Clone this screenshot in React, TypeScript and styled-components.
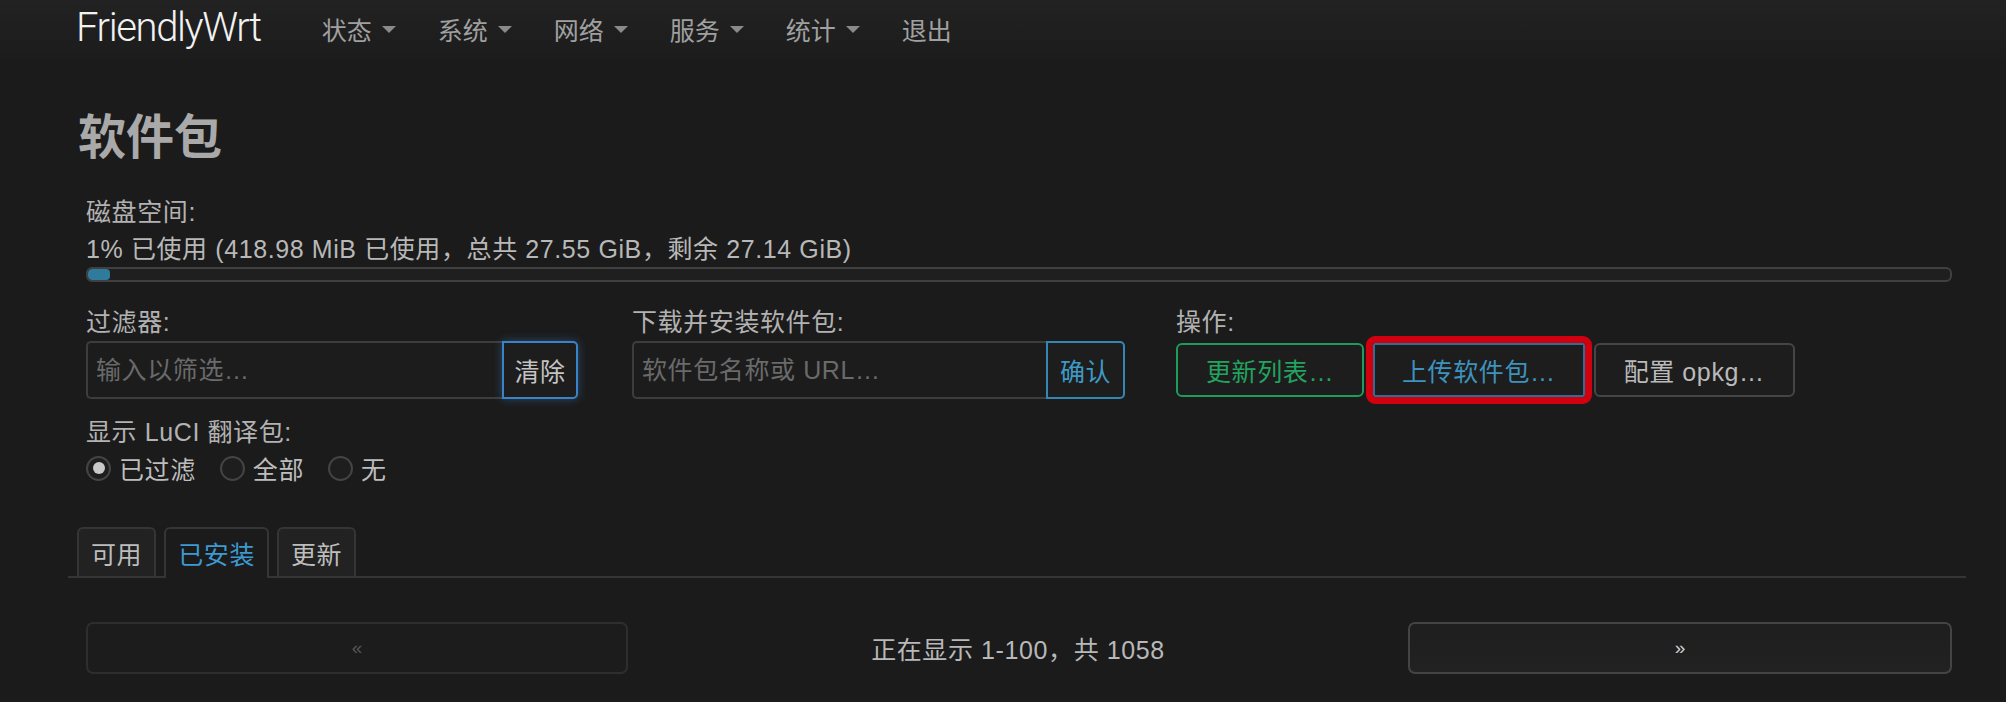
import React from 'react'
import styled, { createGlobalStyle } from 'styled-components'

const GlobalStyle = createGlobalStyle`
  html, body {
    margin: 0;
    padding: 0;
    background: #1b1b1b;
  }
  body {
    font-family: "Liberation Sans", "Noto Sans CJK SC", sans-serif;
    font-size: 25px;
    letter-spacing: 0.6px;
    color: #b4b4b4;
  }
  * { box-sizing: border-box; }
`

const NavBar = styled.header`
  height: 58px;
  display: flex;
  align-items: center;
  padding-left: 76px;
  background: linear-gradient(#222, #1c1c1c);
`

const Brand = styled.a`
  font-family: Roboto, "Liberation Sans", sans-serif;
  font-weight: 300;
  font-size: 40px;
  letter-spacing: -1.4px;
  color: #f2f2f2;
  margin: -4px 40px 0 0;
`

const NavItem = styled.span`
  display: flex;
  align-items: center;
  padding: 0 21px;
  color: #a0a0a0;
  font-size: 25px;
  letter-spacing: 0;
`

const Caret = styled.i`
  width: 0;
  height: 0;
  margin-left: 10px;
  border-left: 7px solid transparent;
  border-right: 7px solid transparent;
  border-top: 7px solid #8a8a8a;
`

const Main = styled.main`
  padding: 0 40px 0 68px;
`

const Title = styled.h2`
  margin: 52px 0 0 10px;
  font-size: 48px;
  line-height: 56px;
  font-weight: 700;
  letter-spacing: 0;
  color: #a9a9a9;
`

const Section = styled.div`
  padding: 0 14px 0 18px;
`

const Label = styled.div`
  line-height: 38px;
  color: #b2b2b2;
`

const Usage = styled.div`
  line-height: 36px;
  color: #b8b8b8;
`

const Progress = styled.div`
  height: 15px;
  border: 2px solid #404040;
  border-radius: 6px;
  background: #1f1f1f;
  overflow: hidden;
`

const ProgressFill = styled.div`
  height: 100%;
  background: #2f7b9c;
  border-radius: 4px;
`

const Controls = styled.div`
  display: grid;
  grid-template-columns: 546px 544px auto;
  margin-top: 21px;
`

const InputGroup = styled.div<{ $w: number }>`
  display: flex;
  width: ${p => p.$w}px;
  height: 58px;
`

const TextInput = styled.input`
  flex: 1;
  min-width: 0;
  background: #1c1c1c;
  border: 2px solid #3d3d3d;
  border-right: none;
  border-radius: 5px 0 0 5px;
  padding: 0 8px;
  font: inherit;
  letter-spacing: inherit;
  color: #b4b4b4;
  outline: none;
  &::placeholder { color: #6a6a6a; }
`

const AddonButton = styled.button<{ $tone: 'glow' | 'blue' }>`
  width: ${p => (p.$tone === 'glow' ? 76 : 79)}px;
  border-radius: 0 5px 5px 0;
  font: inherit;
  letter-spacing: inherit;
  background: #1d1d1d;
  border: 2px solid ${p => (p.$tone === 'glow' ? '#3a83c8' : '#3487b4')};
  color: ${p => (p.$tone === 'glow' ? '#c4c4c4' : '#3e9ac5')};
  box-shadow: ${p => (p.$tone === 'glow' ? '0 0 10px rgba(60, 130, 200, 0.45)' : 'none')};
  padding: 0;
`

const Actions = styled.div`
  display: flex;
  gap: 9px;
  height: 58px;
  align-items: center;
`

const ActionButton = styled.button<{ $tone: 'green' | 'blue' | 'plain'; $marked?: boolean }>`
  height: 54px;
  padding: 0 28px;
  font: inherit;
  letter-spacing: inherit;
  background: #1d1d1d;
  border: 2px solid ${p => (p.$tone === 'green' ? '#1e9c5c' : p.$tone === 'blue' ? '#2f6d96' : '#454545')};
  color: ${p => (p.$tone === 'green' ? '#22a35f' : p.$tone === 'blue' ? '#3d93bd' : '#bababa')};
  outline: ${p => (p.$marked ? '7px solid #d0000f' : 'none')};
  outline-offset: 0;
  border-radius: ${p => (p.$marked ? '2px' : '6px')};
  ${p => (p.$marked ? 'padding: 0 27px;' : '')}
`

const RadioRow = styled.div`
  display: flex;
  align-items: center;
  height: 34px;
  gap: 24px;
`

const RadioOption = styled.label`
  display: flex;
  align-items: center;
  gap: 8px;
  color: #bdbdbd;
`

const RadioDot = styled.span<{ $checked?: boolean }>`
  width: 25px;
  height: 25px;
  border-radius: 50%;
  border: 2px solid #444;
  background: #1e1e1e;
  display: flex;
  align-items: center;
  justify-content: center;
  &::after {
    content: '';
    width: 12px;
    height: 12px;
    border-radius: 50%;
    background: ${p => (p.$checked ? '#c9c9c9' : 'transparent')};
  }
`

const TabBar = styled.ul`
  display: flex;
  gap: 8px;
  margin: 42px 0 0;
  padding: 0 0 0 9px;
  list-style: none;
  border-bottom: 2px solid #353535;
`

const Tab = styled.li<{ $active?: boolean }>`
  height: 51px;
  margin-bottom: -2px;
  padding: 0 12px 2px;
  display: flex;
  align-items: center;
  border: 2px solid #353535;
  border-bottom: none;
  border-radius: 6px 6px 0 0;
  background: ${p => (p.$active ? '#1b1b1b' : '#222')};
  color: ${p => (p.$active ? '#3d9ad1' : '#bdbdbd')};
  ${p => (p.$active ? '' : 'border-bottom: 2px solid #353535; padding-bottom: 0;')}
`

const Pager = styled.div`
  display: flex;
  align-items: center;
  justify-content: space-between;
  margin-top: 44px;
`

const PageButton = styled.button<{ $disabled?: boolean }>`
  width: 542px;
  height: 52px;
  border-radius: 7px;
  font-family: "Liberation Sans", sans-serif;
  font-size: 19px;
  border: 2px solid ${p => (p.$disabled ? '#2e2e2e' : '#444')};
  background: ${p => (p.$disabled ? '#1c1c1c' : 'linear-gradient(#1e1e1e, #222)')};
  color: ${p => (p.$disabled ? '#555' : '#d0d0d0')};
`

const PageInfo = styled.span`
  color: #b8b8b8;
`

const navItems = [
  { label: '状态', menu: true },
  { label: '系统', menu: true },
  { label: '网络', menu: true },
  { label: '服务', menu: true },
  { label: '统计', menu: true },
  { label: '退出', menu: false },
]

const usedPercent = 1.2

export default function App() {
  return (
    <>
      <GlobalStyle />
      <NavBar>
        <Brand>FriendlyWrt</Brand>
        {navItems.map(item => (
          <NavItem key={item.label}>
            {item.label}
            {item.menu && <Caret />}
          </NavItem>
        ))}
      </NavBar>
      <Main>
        <Title>软件包</Title>
        <Section style={{ marginTop: 27 }}>
          <Label>磁盘空间:</Label>
          <Usage>1% 已使用 (418.98 MiB 已使用，总共 27.55 GiB，剩余 27.14 GiB)</Usage>
          <Progress>
            <ProgressFill style={{ width: `${usedPercent}%` }} />
          </Progress>
          <Controls>
            <div>
              <Label>过滤器:</Label>
              <InputGroup $w={492}>
                <TextInput placeholder="输入以筛选…" />
                <AddonButton $tone="glow">清除</AddonButton>
              </InputGroup>
            </div>
            <div>
              <Label>下载并安装软件包:</Label>
              <InputGroup $w={493}>
                <TextInput placeholder="软件包名称或 URL…" />
                <AddonButton $tone="blue">确认</AddonButton>
              </InputGroup>
            </div>
            <div>
              <Label>操作:</Label>
              <Actions>
                <ActionButton $tone="green">更新列表…</ActionButton>
                <ActionButton $tone="blue" $marked>上传软件包…</ActionButton>
                <ActionButton $tone="plain">配置 opkg…</ActionButton>
              </Actions>
            </div>
          </Controls>
          <Label style={{ marginTop: 14 }}>显示 LuCI 翻译包:</Label>
          <RadioRow>
            <RadioOption><RadioDot $checked />已过滤</RadioOption>
            <RadioOption><RadioDot />全部</RadioOption>
            <RadioOption><RadioDot />无</RadioOption>
          </RadioRow>
        </Section>
        <TabBar>
          <Tab>可用</Tab>
          <Tab $active>已安装</Tab>
          <Tab>更新</Tab>
        </TabBar>
        <Section>
          <Pager>
            <PageButton $disabled>«</PageButton>
            <PageInfo>正在显示 1-100，共 1058</PageInfo>
            <PageButton style={{ width: 544 }}>»</PageButton>
          </Pager>
        </Section>
      </Main>
    </>
  )
}
